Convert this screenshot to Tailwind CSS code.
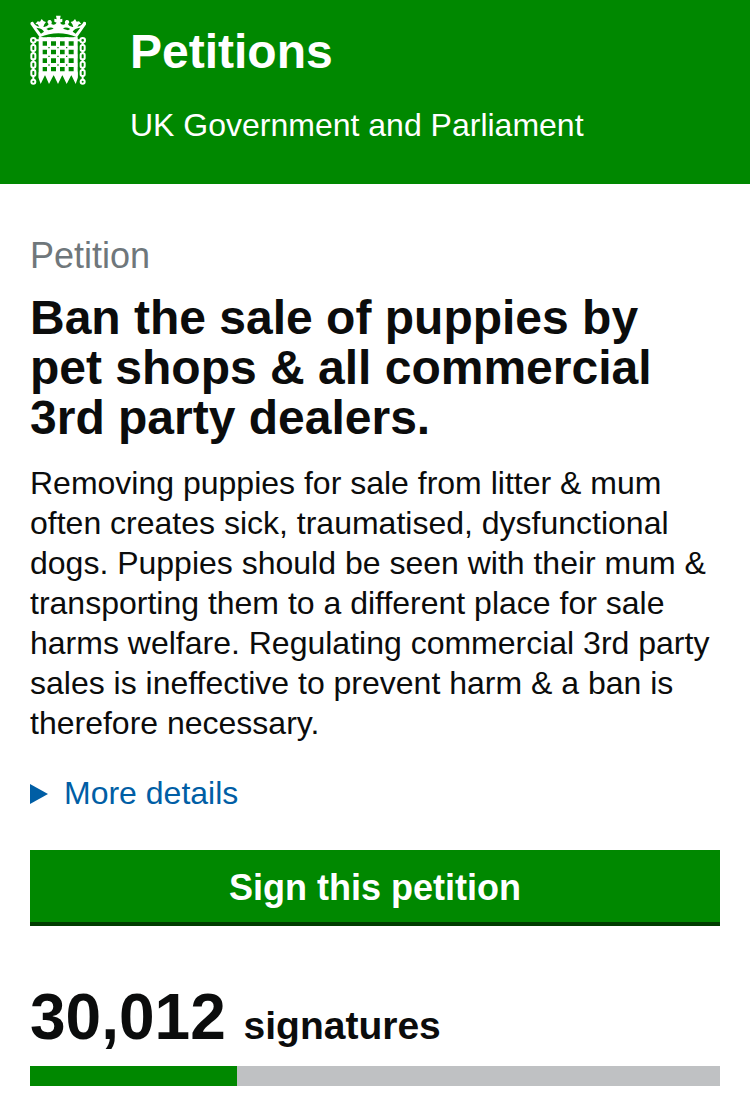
<!DOCTYPE html>
<html lang="en">
<head>
    <meta charset="UTF-8">
    <meta name="viewport" content="width=device-width, initial-scale=1.0">
    <title>Ban the sale of puppies - Petitions</title>
    <script src="https://cdn.jsdelivr.net/npm/@tailwindcss/browser@4"></script>
</head>
<body class="min-h-screen bg-white text-[#0b0c0c] text-[32px] leading-10 font-['Liberation_Sans',Arial,sans-serif]">
    <header class="flex gap-11 bg-[#008800] px-[30px] pt-[27px] pb-[39px] text-white">
        <!-- Crowned portcullis -->
        <svg class="-mt-3 h-[70px] w-[56px] shrink-0" viewBox="30 30 168 210" fill="none" stroke="#fff" role="img" aria-label="Parliament">
            <!-- crown -->
            <path d="M59 97L31 57Q31 49 39 50Q46 64 58 65L53 58L46 57L53 49L60 50L65 42L71 49L78 51L73 58L70 66Q81 67 86 58L82 52Q83 43 91 45Q98 49 94 57Q104 63 110 53L103 50V41L110 43L108 32H122L120 43L127 41V50L120 53Q126 63 136 57Q132 49 139 45Q147 43 148 52L144 58Q149 67 160 66L157 58L152 51L159 49L165 42L170 50L177 49L184 57L177 58L172 65Q184 64 191 50Q199 49 199 57L171 97Q115 72 59 97Z" fill="#fff" stroke="none"/>
            <path d="M49 68L63 86L72 80Q67 70 49 68ZM181 68L167 86L158 80Q163 70 181 68ZM79 72L86 76L101 71Q93 64 79 72ZM151 72L144 76L129 71Q137 64 151 72Z" fill="#008800" stroke="none"/>
            <!-- grille -->
            <path d="M57 103H172M57 128H172M57 154H172M57 180H172M57 205H172" stroke-width="12"/>
            <path d="M62 97V218M87 97V218M114 97V218M140 97V218M167 97V218" stroke-width="12"/>
            <path d="M56 202H173V220L167 237L154 210L140 237L127 210L114 237L101 210L87 237L75 210L62 237L56 220Z" fill="#fff" stroke="none"/>
            <path d="M85 126h4v4h-4zM112 126h4v4h-4zM138 126h4v4h-4zM85 152h4v4h-4zM112 152h4v4h-4zM138 152h4v4h-4zM85 178h4v4h-4zM112 178h4v4h-4zM138 178h4v4h-4z" fill="#008800" stroke="none"/>
            <!-- chains -->
            <g stroke-width="6">
                <circle cx="40" cy="106" r="7"/>
                <rect x="34" y="120" width="12" height="18" rx="5"/>
                <rect x="34" y="145" width="12" height="18" rx="5"/>
                <rect x="34" y="170" width="12" height="18" rx="5"/>
                <rect x="34" y="195" width="12" height="18" rx="5"/>
                <circle cx="40" cy="230" r="6"/>
                <circle cx="188" cy="106" r="7"/>
                <rect x="182" y="120" width="12" height="18" rx="5"/>
                <rect x="182" y="145" width="12" height="18" rx="5"/>
                <rect x="182" y="170" width="12" height="18" rx="5"/>
                <rect x="182" y="195" width="12" height="18" rx="5"/>
                <circle cx="188" cy="230" r="6"/>
                <path d="M40 113v7M40 138v7M40 163v7M40 188v7M40 213v11M188 113v7M188 138v7M188 163v7M188 188v7M188 213v11M47 106h12M169 106h12"/>
            </g>
        </svg>
        <div>
            <a href="#" class="block text-[48px] leading-[50px] font-bold">Petitions</a>
            <p class="mt-7">UK Government and Parliament</p>
        </div>
    </header>

    <main class="px-[30px] pt-[52px] pb-3">
        <h1>
            <span class="block text-[36px] text-[#6f777b]">Petition</span>
            <span class="mt-[17px] block text-[48px] leading-[50px] font-bold">Ban the sale of puppies by pet shops &amp; all commercial 3rd party dealers.</span>
        </h1>
        <p class="mt-5">Removing puppies for sale from litter &amp; mum often creates sick, traumatised, dysfunctional dogs. Puppies should be seen with their mum &amp; transporting them to a different place for sale harms welfare. Regulating commercial 3rd party sales is ineffective to prevent harm &amp; a ban is therefore necessary.</p>

        <details class="mt-[30px]">
            <summary class="flex cursor-pointer items-center gap-4 text-[#005ea5]">
                <svg class="h-[21px] w-[18px]" viewBox="0 0 18 21" fill="currentColor" aria-hidden="true"><path d="M0 1L18 11L0 21Z"/></svg>
                More details
            </summary>
        </details>

        <button type="button" class="mt-[37px] block w-full cursor-pointer border-b-4 border-[#003c00] bg-[#008800] pt-[18px] pb-[14px] text-[36px] leading-10 font-bold text-white">Sign this petition</button>

        <p class="mt-[55px] text-[64px] leading-[72px] font-bold">30,012 <span class="text-[39px] leading-none">signatures</span></p>
        <div class="mt-[13px] h-5 bg-[#bfc1c3]" role="progressbar" aria-label="Signatures" aria-valuemin="0" aria-valuemax="100000" aria-valuenow="30012">
            <div class="h-full bg-[#008800]" style="width: 30.012%"></div>
        </div>
    </main>
</body>
</html>
